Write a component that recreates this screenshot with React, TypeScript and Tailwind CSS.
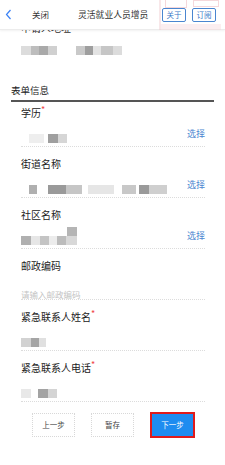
import React from "react";

const font = { fontFamily: '"Noto Sans CJK SC", "Noto Sans", sans-serif' };

type Block = [number, string, number?];

// pixelated blur placeholder for masked values
function Mosaic({ blocks }: { blocks: Block[] }) {
  return (
    <div className="flex items-center h-[9px]">
      {blocks.map(([w, c, gap], i) => (
        <div key={i} className="h-[9px]" style={{ width: w, background: c, marginLeft: gap ?? 0 }} />
      ))}
    </div>
  );
}

function Label({ text, required }: { text: string; required?: boolean }) {
  return (
    <div className="h-5 flex items-center text-[10px] text-[#222]">
      {text}
      {required && <span className="text-[#ef4444] text-[9px] -mt-1">*</span>}
    </div>
  );
}

function Field({
  label,
  required,
  select,
  children,
}: {
  label: string;
  required?: boolean;
  select?: boolean;
  children?: React.ReactNode;
}) {
  return (
    <div className="mb-[6px]">
      <Label text={label} required={required} />
      <div className="mt-2 h-[17px] flex items-center justify-between border-b border-dotted border-[#dcdcdc]">
        <div className="flex-1">{children}</div>
        {select && <span className="text-[9px] text-[#4a86d0] -mt-2">选择</span>}
      </div>
    </div>
  );
}

export default function App() {
  return (
    <div className="w-[225px] h-[465px] bg-white overflow-hidden relative" style={font}>
      {/* Header */}
      <div className="relative h-[30px] flex items-center border-b border-[#ececec] shadow-[0_1px_2px_rgba(0,0,0,0.06)] bg-white z-10">
        {/* faint stamp watermark */}
        <div className="absolute right-0 top-0 w-[66px] h-[32px] opacity-40 pointer-events-none">
          <div className="absolute left-[6px] top-[-2px] w-[22px] h-[10px] border border-[#e8a0a8]" />
          <div className="absolute left-[34px] top-[0px] w-[26px] h-[7px] border border-[#e8a0a8]" />
          <div className="absolute left-[2px] top-[24px] w-[60px] h-[6px] bg-[#f6d6da]" />
          <div className="absolute left-[0px] top-[0px] w-[2px] h-[30px] bg-[#f0c4ca]" />
        </div>
        <svg className="ml-[5px]" width="7" height="11" viewBox="0 0 7 11">
          <path d="M5.5 1 L1.5 5.5 L5.5 10" fill="none" stroke="#3b82f6" strokeWidth="1.2" />
        </svg>
        <span className="ml-[20px] text-[8.5px] text-[#333]">关闭</span>
        <span className="ml-[29px] text-[8.8px] text-[#333]">灵活就业人员增员</span>
        <div className="ml-auto mr-[9px] flex gap-[6px] relative">
          <span className="w-[24px] h-[14px] flex items-center justify-center border border-[#4a86d0] rounded-[2px] text-[7.5px] text-[#3b78c8] bg-white/70">关于</span>
          <span className="w-[24px] h-[14px] flex items-center justify-center border border-[#4a86d0] rounded-[2px] text-[7.5px] text-[#3b78c8] bg-white/70">订阅</span>
        </div>
      </div>

      {/* cut-off row under header */}
      <div className="px-[21px]">
        <div className="h-[6px] overflow-hidden">
          <div className="-mt-[9px] text-[10px] text-[#333] leading-[14px]">申请人地址</div>
        </div>
        <div className="mt-[10px] flex gap-[19px]">
          <Mosaic blocks={[[10, "#dcdcdc"], [8, "#bdbdbd"], [9, "#a9a9a9"], [9, "#d0d0d0"]]} />
          <Mosaic blocks={[[9, "#c9c9c9"], [8, "#9e9e9e"], [8, "#e3e3e3"], [12, "#c6c6c6"], [9, "#dcdcdc"]]} />
        </div>
      </div>

      {/* Section title */}
      <div className="mt-[25px] mx-[11px] h-[22px] flex items-center border-b-2 border-[#555] text-[9.5px] text-[#222]">
        表单信息
      </div>

      <div className="pl-[21px] pr-[20px] pt-0">
        <Field label="学历" required select>
          <Mosaic blocks={[[15, "#eeeeee", 8], [10, "#9f9f9f", 4], [9, "#d6d6d6"]]} />
        </Field>
        <Field label="街道名称" select>
          <Mosaic
            blocks={[
              [8, "#b0b0b0", 8],
              [18, "#9a9a9a", 11],
              [16, "#c6c6c6"],
              [26, "#e6e6e6", 6],
              [14, "#c8c8c8", 8],
              [10, "#9a9a9a", 3],
              [18, "#cfcfcf"],
            ]}
          />
        </Field>
        <Field label="社区名称" select>
          <div className="-mt-[8px]">
            <div className="ml-[46px] w-[10px] h-[9px] bg-[#b5b5b5]" />
            <Mosaic blocks={[[10, "#b0b0b0"], [9, "#e6e6e6"], [9, "#c4c4c4"], [8, "#ececec"], [9, "#bcbcbc"], [11, "#d8d8d8"]]} />
          </div>
        </Field>
        <Field label="邮政编码">
          <span className="text-[8.5px] text-[#c4c4c4]">请输入邮政编码</span>
        </Field>
        <Field label="紧急联系人姓名" required>
          <Mosaic blocks={[[10, "#d2d2d2"], [8, "#a5a5a5"], [7, "#e0e0e0"]]} />
        </Field>
        <Field label="紧急联系人电话" required>
          <Mosaic blocks={[[10, "#e8e8e8"], [10, "#a3a3a3", 7], [9, "#d4d4d4"]]} />
        </Field>
      </div>

      {/* Actions */}
      <div className="mt-[11px] flex pl-[32px] gap-[16px]">
        <button className="w-[43px] h-[24px] border border-dotted border-[#d8d8d8] text-[7.5px] text-[#444] bg-white">上一步</button>
        <button className="w-[43px] h-[24px] border border-dotted border-[#d8d8d8] text-[7.5px] text-[#444] bg-white">暂存</button>
        <button className="w-[45px] h-[26px] -mt-[1px] border-2 border-[#e01b1b] text-[7.5px] text-white bg-[#1e8cf0]">下一步</button>
      </div>
    </div>
  );
}
